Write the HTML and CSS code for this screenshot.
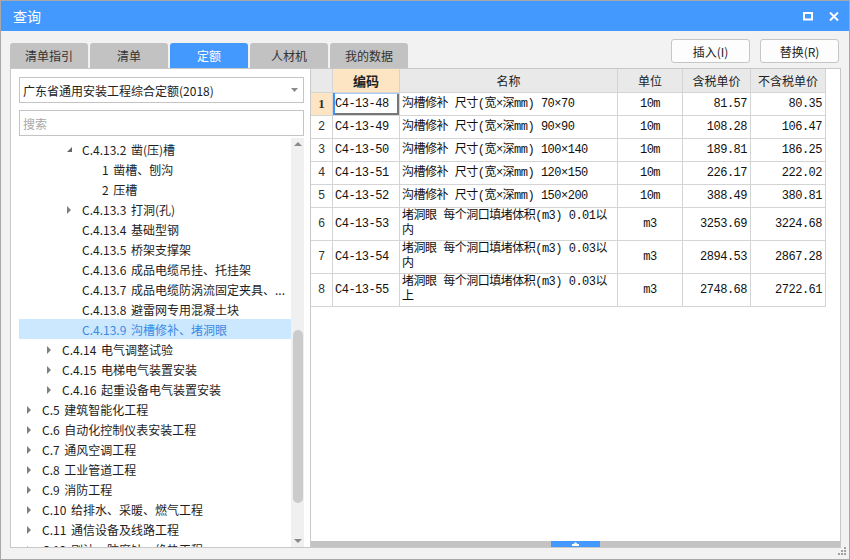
FILE: index.html
```html
<!DOCTYPE html>
<html lang="zh-CN">
<head>
<meta charset="utf-8">
<title>查询</title>
<link rel="stylesheet" href="styles.css">
</head>
<body>
<div class="window">
  <div class="titlebar">
    <span class="title">查询</span>
    <div class="winbtns">
      <svg width="10" height="9" viewBox="0 0 10 9"><rect x="1" y="1" width="8" height="6.5" fill="none" stroke="#fff" stroke-width="2"/></svg>
      <svg width="10" height="9" viewBox="0 0 10 9"><path d="M1 0.5L9 8.5M9 0.5L1 8.5" stroke="#fff" stroke-width="2" fill="none"/></svg>
    </div>
  </div>
  <div class="content">
    <div class="toolbar">
      <div class="tabs">
        <div class="tab">清单指引</div>
        <div class="tab">清单</div>
        <div class="tab active">定额</div>
        <div class="tab">人材机</div>
        <div class="tab">我的数据</div>
      </div>
      <div class="actions">
        <button class="btn">插入(I)</button>
        <button class="btn">替换(R)</button>
      </div>
    </div>
    <div class="main">
      <div class="left">
        <div class="select">
          <span>广东省通用安装工程综合定额(2018)</span>
          <svg width="7" height="4" viewBox="0 0 7 4"><path d="M0 0H7L3.5 4Z" fill="#8a8a8a"/></svg>
        </div>
        <input class="search" type="text" placeholder="搜索">
        <div class="treewrap">
          <div class="tree">
            <div class="row l2"><span class="arr"><svg width="5" height="5" viewBox="0 0 5 5"><path d="M5 0V5H0Z" fill="#666"/></svg></span>C.4.13.2 凿(压)槽</div>
            <div class="row l3"><span class="arr"></span>1 凿槽、刨沟</div>
            <div class="row l3"><span class="arr"></span>2 压槽</div>
            <div class="row l2"><span class="arr"><svg class="tri" width="4" height="8" viewBox="0 0 4 8"><path d="M0 0L4 4L0 8Z" fill="#808080"/></svg></span>C.4.13.3 打洞(孔)</div>
            <div class="row l2"><span class="arr"></span>C.4.13.4 基础型钢</div>
            <div class="row l2"><span class="arr"></span>C.4.13.5 桥架支撑架</div>
            <div class="row l2"><span class="arr"></span>C.4.13.6 成品电缆吊挂、托挂架</div>
            <div class="row l2"><span class="arr"></span>C.4.13.7 成品电缆防涡流固定夹具、...</div>
            <div class="row l2"><span class="arr"></span>C.4.13.8 避雷网专用混凝土块</div>
            <div class="row l2 sel"><span class="arr"></span>C.4.13.9 沟槽修补、堵洞眼</div>
            <div class="row l1"><span class="arr"><svg class="tri" width="4" height="8" viewBox="0 0 4 8"><path d="M0 0L4 4L0 8Z" fill="#808080"/></svg></span>C.4.14 电气调整试验</div>
            <div class="row l1"><span class="arr"><svg class="tri" width="4" height="8" viewBox="0 0 4 8"><path d="M0 0L4 4L0 8Z" fill="#808080"/></svg></span>C.4.15 电梯电气装置安装</div>
            <div class="row l1"><span class="arr"><svg class="tri" width="4" height="8" viewBox="0 0 4 8"><path d="M0 0L4 4L0 8Z" fill="#808080"/></svg></span>C.4.16 起重设备电气装置安装</div>
            <div class="row l0"><span class="arr"><svg class="tri" width="4" height="8" viewBox="0 0 4 8"><path d="M0 0L4 4L0 8Z" fill="#808080"/></svg></span>C.5 建筑智能化工程</div>
            <div class="row l0"><span class="arr"><svg class="tri" width="4" height="8" viewBox="0 0 4 8"><path d="M0 0L4 4L0 8Z" fill="#808080"/></svg></span>C.6 自动化控制仪表安装工程</div>
            <div class="row l0"><span class="arr"><svg class="tri" width="4" height="8" viewBox="0 0 4 8"><path d="M0 0L4 4L0 8Z" fill="#808080"/></svg></span>C.7 通风空调工程</div>
            <div class="row l0"><span class="arr"><svg class="tri" width="4" height="8" viewBox="0 0 4 8"><path d="M0 0L4 4L0 8Z" fill="#808080"/></svg></span>C.8 工业管道工程</div>
            <div class="row l0"><span class="arr"><svg class="tri" width="4" height="8" viewBox="0 0 4 8"><path d="M0 0L4 4L0 8Z" fill="#808080"/></svg></span>C.9 消防工程</div>
            <div class="row l0"><span class="arr"><svg class="tri" width="4" height="8" viewBox="0 0 4 8"><path d="M0 0L4 4L0 8Z" fill="#808080"/></svg></span>C.10 给排水、采暖、燃气工程</div>
            <div class="row l0"><span class="arr"><svg class="tri" width="4" height="8" viewBox="0 0 4 8"><path d="M0 0L4 4L0 8Z" fill="#808080"/></svg></span>C.11 通信设备及线路工程</div>
            <div class="row l0"><span class="arr"><svg class="tri" width="4" height="8" viewBox="0 0 4 8"><path d="M0 0L4 4L0 8Z" fill="#808080"/></svg></span>C.12 刷油、防腐蚀、绝热工程</div>
          </div>
          <div class="vscroll">
            <svg class="sarrow" width="8" height="4" viewBox="0 0 8 4"><path d="M4 0L8 4H0Z" fill="#8a8a8a"/></svg>
            <span class="thumb"></span>
            <svg class="sarrow down" width="8" height="4" viewBox="0 0 8 4"><path d="M0 0H8L4 4Z" fill="#8a8a8a"/></svg>
          </div>
        </div>
      </div>
      <div class="right">
        <div class="grid">
          <div class="c h"></div>
          <div class="c h act">编码</div>
          <div class="c h">名称</div>
          <div class="c h">单位</div>
          <div class="c h">含税单价</div>
          <div class="c h">不含税单价</div>

          <div class="c n act">1</div>
          <div class="c code focus">C4-13-48</div>
          <div class="c name">沟槽修补 尺寸(宽×深mm) 70×70</div>
          <div class="c unit">10m</div>
          <div class="c p">81.57</div>
          <div class="c p">80.35</div>

          <div class="c n">2</div>
          <div class="c code">C4-13-49</div>
          <div class="c name">沟槽修补 尺寸(宽×深mm) 90×90</div>
          <div class="c unit">10m</div>
          <div class="c p">108.28</div>
          <div class="c p">106.47</div>

          <div class="c n">3</div>
          <div class="c code">C4-13-50</div>
          <div class="c name">沟槽修补 尺寸(宽×深mm) 100×140</div>
          <div class="c unit">10m</div>
          <div class="c p">189.81</div>
          <div class="c p">186.25</div>

          <div class="c n">4</div>
          <div class="c code">C4-13-51</div>
          <div class="c name">沟槽修补 尺寸(宽×深mm) 120×150</div>
          <div class="c unit">10m</div>
          <div class="c p">226.17</div>
          <div class="c p">222.02</div>

          <div class="c n">5</div>
          <div class="c code">C4-13-52</div>
          <div class="c name">沟槽修补 尺寸(宽×深mm) 150×200</div>
          <div class="c unit">10m</div>
          <div class="c p">388.49</div>
          <div class="c p">380.81</div>

          <div class="c n">6</div>
          <div class="c code">C4-13-53</div>
          <div class="c name">堵洞眼 每个洞口填堵体积(m3) 0.01以<br>内</div>
          <div class="c unit">m3</div>
          <div class="c p">3253.69</div>
          <div class="c p">3224.68</div>

          <div class="c n">7</div>
          <div class="c code">C4-13-54</div>
          <div class="c name">堵洞眼 每个洞口填堵体积(m3) 0.03以<br>内</div>
          <div class="c unit">m3</div>
          <div class="c p">2894.53</div>
          <div class="c p">2867.28</div>

          <div class="c n">8</div>
          <div class="c code">C4-13-55</div>
          <div class="c name">堵洞眼 每个洞口填堵体积(m3) 0.03以<br>上</div>
          <div class="c unit">m3</div>
          <div class="c p">2748.68</div>
          <div class="c p">2722.61</div>
        </div>
        <div class="hsplit">
          <div class="handle">
            <svg width="7" height="4" viewBox="0 0 7 4"><path d="M3.5 0L5.5 2H1.5Z M0 2H7V4H0Z" fill="#fff"/></svg>
          </div>
        </div>
      </div>
    </div>
  </div>
  <svg class="grip" width="8" height="8" viewBox="0 0 8 8">
    <rect x="6" y="0" width="2" height="2" fill="#a0a0a0"/>
    <rect x="3" y="3" width="2" height="2" fill="#a0a0a0"/>
    <rect x="6" y="3" width="2" height="2" fill="#a0a0a0"/>
    <rect x="0" y="6" width="2" height="2" fill="#a0a0a0"/>
    <rect x="3" y="6" width="2" height="2" fill="#a0a0a0"/>
    <rect x="6" y="6" width="2" height="2" fill="#a0a0a0"/>
  </svg>
</div>
</body>
</html>
```
FILE: styles.css
```css
* { box-sizing: border-box; }
body {
  margin: 0;
  background: #f2f2f2;
  font-family: "Noto Sans CJK SC", "Microsoft YaHei", sans-serif;
  font-size: 12px;
  color: #222;
}
.window {
  width: 850px;
  height: 560px;
  border: 1px solid #a8a8a8;
  background: #f2f2f2;
  display: flex;
  flex-direction: column;
  position: relative;
  overflow: hidden;
}
.titlebar {
  height: 30px;
  flex: none;
  background: #4499ff;
  display: flex;
  align-items: center;
  padding: 0 10px 0 12px;
}
.title {
  flex: 1;
  color: #fff;
  font-size: 14px;
}
.winbtns {
  display: flex;
  align-items: center;
  gap: 16px;
}
.winbtns svg { display: block; }
.content {
  flex: 1;
  display: flex;
  flex-direction: column;
  padding: 0 8px 11px 9px;
  min-height: 0;
}
.toolbar {
  height: 37px;
  flex: none;
  display: flex;
  justify-content: space-between;
}
.tabs {
  display: flex;
  gap: 2px;
  align-self: flex-end;
}
.tab {
  width: 78px;
  height: 25px;
  line-height: 25px;
  text-align: center;
  background: #c2c2c2;
  border-radius: 3px 3px 0 0;
  color: #333;
  font-size: 12px;
}
.tab.active {
  background: #4499ff;
  color: #fff;
}
.actions {
  display: flex;
  gap: 10px;
  margin-top: 8px;
  margin-right: 2px;
  align-self: flex-start;
}
.btn {
  width: 79px;
  height: 24px;
  background: #fdfdfd;
  border: 1px solid #c6c6c6;
  border-radius: 3px;
  font-family: "Noto Sans CJK SC", sans-serif;
  font-size: 12px;
  color: #222;
  padding: 0;
}
.main {
  flex: 1;
  display: flex;
  min-height: 0;
}
.left {
  width: 300px;
  flex: none;
  background: #fff;
  border: 1px solid #c8c8c8;
  border-right: none;
  padding: 8px 6px 0 8px;
  display: flex;
  flex-direction: column;
  min-height: 0;
}
.select {
  height: 26px;
  flex: none;
  border: 1px solid #c4c4c4;
  display: flex;
  align-items: center;
  justify-content: space-between;
  padding: 0 5px 0 3px;
  color: #222;
}
.select svg { display: block; }
.search {
  height: 26px;
  flex: none;
  margin: 7px 0 0;
  width: 100%;
  border: 1px solid #c4c4c4;
  padding: 0 3px;
  font-family: "Noto Sans CJK SC", sans-serif;
  font-size: 12px;
  color: #222;
  background: #fff;
  outline: none;
}
.search::placeholder { color: #a8a8a8; }
.treewrap {
  flex: 1;
  margin-top: 2px;
  display: flex;
  min-height: 0;
  overflow: hidden;
}
.tree {
  width: 272px;
  flex: none;
  padding-top: 1px;
  overflow: hidden;
}
.row {
  height: 20px;
  display: flex;
  align-items: center;
  white-space: pre;
  overflow: hidden;
  color: #1e1e1e;
  word-spacing: 2px;
}
.row.sel {
  background: #cce8ff;
  color: #3a8ae4;
}
.l0 { padding-left: 8px; }
.l1 { padding-left: 28px; }
.l2 { padding-left: 48px; }
.l3 { padding-left: 68px; }
.arr {
  width: 15px;
  height: 20px;
  flex: none;
  display: flex;
  align-items: center;
}
.arr svg { display: block; margin-top: 1px; }
.vscroll {
  width: 13px;
  flex: none;
  background: #f0f0f0;
  display: flex;
  flex-direction: column;
  align-items: center;
}
.sarrow {
  display: block;
  margin-top: 4px;
  flex: none;
}
.sarrow.down {
  margin-top: auto;
  margin-bottom: 4px;
}
.thumb {
  width: 10px;
  height: 173px;
  margin-top: 184px;
  background: #cbcbcb;
  border-radius: 5px;
  flex: none;
}
.right {
  flex: 1;
  background: #fff;
  border: 1px solid #c8c8c8;
  display: flex;
  flex-direction: column;
  min-width: 0;
}
.grid {
  flex: 1;
  display: grid;
  grid-template-columns: 22px 67px 218px 65px 68px 75px;
  grid-template-rows: 24px repeat(5, 23px) repeat(3, 33px);
  align-content: start;
}
.c {
  border-right: 1px solid #d4d4d4;
  border-bottom: 1px solid #d4d4d4;
  display: flex;
  align-items: center;
  white-space: nowrap;
  overflow: hidden;
  font-family: "Liberation Mono", "Noto Sans CJK SC", monospace;
  font-size: 12px;
  letter-spacing: -0.5px;
  color: #111;
}
.h {
  background: #e9e9e9;
  justify-content: center;
  font-family: "Noto Sans CJK SC", sans-serif;
  letter-spacing: 0;
  color: #222;
}
.h.act {
  background: #fde5c4;
  font-weight: bold;
  font-size: 13px;
}
.n {
  justify-content: center;
  color: #333;
  letter-spacing: 0;
}
.n.act {
  background: #fde5c4;
  font-family: "Liberation Serif", serif;
  font-weight: bold;
  font-size: 13px;
}
.code { padding-left: 2px; }
.focus {
  box-shadow: inset 2px 0 0 #3d95f5, inset 0 1px 0 #a9cdf7, inset -2px -2px 0 #777;
}
.name {
  padding-left: 2px;
  line-height: 15px;
}
.unit { justify-content: center; }
.p {
  justify-content: flex-end;
  padding-right: 3px;
}
.hsplit {
  height: 6px;
  flex: none;
  background: #c3c3c3;
  display: flex;
  justify-content: center;
}
.handle {
  width: 49px;
  height: 6px;
  background: #4499ff;
  display: flex;
  align-items: center;
  justify-content: center;
}
.handle svg { display: block; }
.grip {
  position: absolute;
  right: 3px;
  bottom: 4px;
  display: block;
}
```
